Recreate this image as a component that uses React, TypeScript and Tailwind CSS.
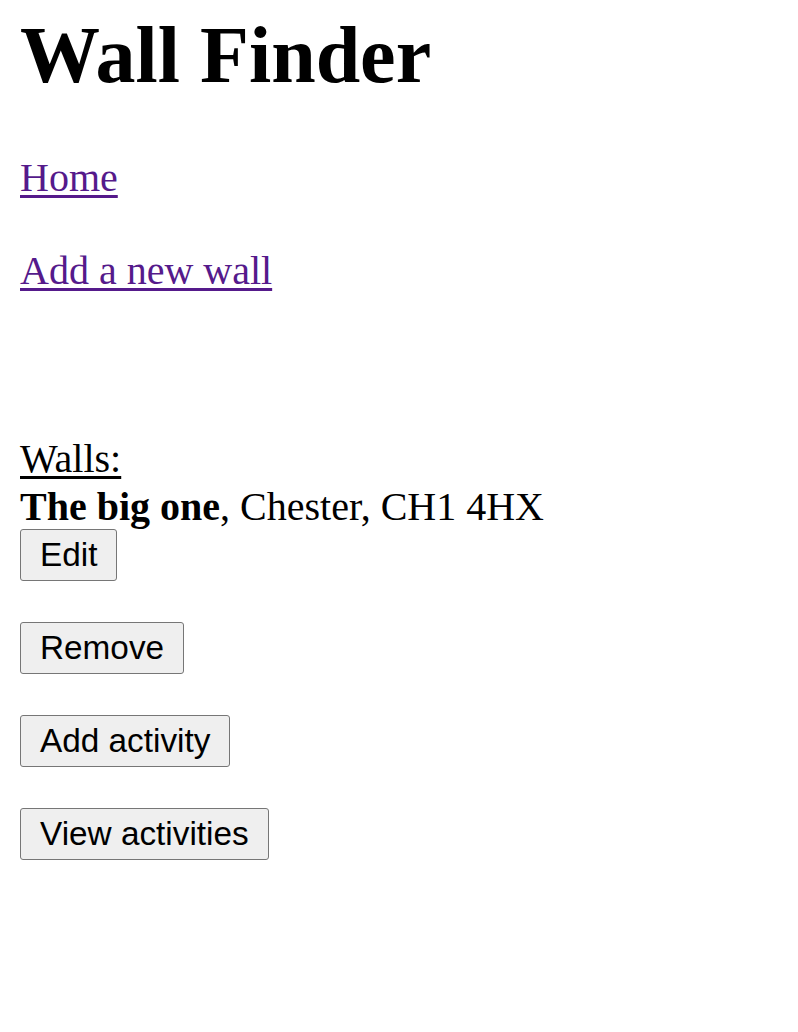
const ACTIONS = ["Edit", "Remove", "Add activity", "View activities"];

function PlainButton({ label, first }: { label: string; first?: boolean }) {
  return (
    <button
      className={`${first ? "-mt-[1px]" : "mt-[41px]"} self-start rounded-[3px] border border-[#767676] bg-[#efefef] px-[19px] py-[7px] font-['Liberation_Sans',Arial,sans-serif] text-[33.33px] leading-[36px] text-black`}
    >
      {label}
    </button>
  );
}

export default function App() {
  return (
    <div className="flex min-h-[1032px] flex-col bg-white px-[20px] font-['Liberation_Serif','Times_New_Roman',serif] text-black">
      <h1 className="mt-[9px] text-[80px] font-bold leading-[92px]">Wall Finder</h1>

      <a
        href="#"
        className="mt-[54px] self-start text-[40px] leading-[46px] text-[#551a8b] underline decoration-[3px] underline-offset-[4px]"
      >
        Home
      </a>
      <a
        href="#"
        className="mt-[47px] self-start text-[40px] leading-[46px] text-[#551a8b] underline decoration-[3px] underline-offset-[4px]"
      >
        Add a new wall
      </a>

      <div className="mt-[142px] text-[40px] leading-[46px]">
        <span className="underline decoration-[3px] underline-offset-[4px]">Walls:</span>
      </div>
      <div className="mt-[2px] text-[40px] leading-[46px]">
        <b>The big one</b>, Chester, CH1 4HX
      </div>

      {ACTIONS.map((a, i) => (
        <PlainButton key={a} label={a} first={i === 0} />
      ))}
    </div>
  );
}
